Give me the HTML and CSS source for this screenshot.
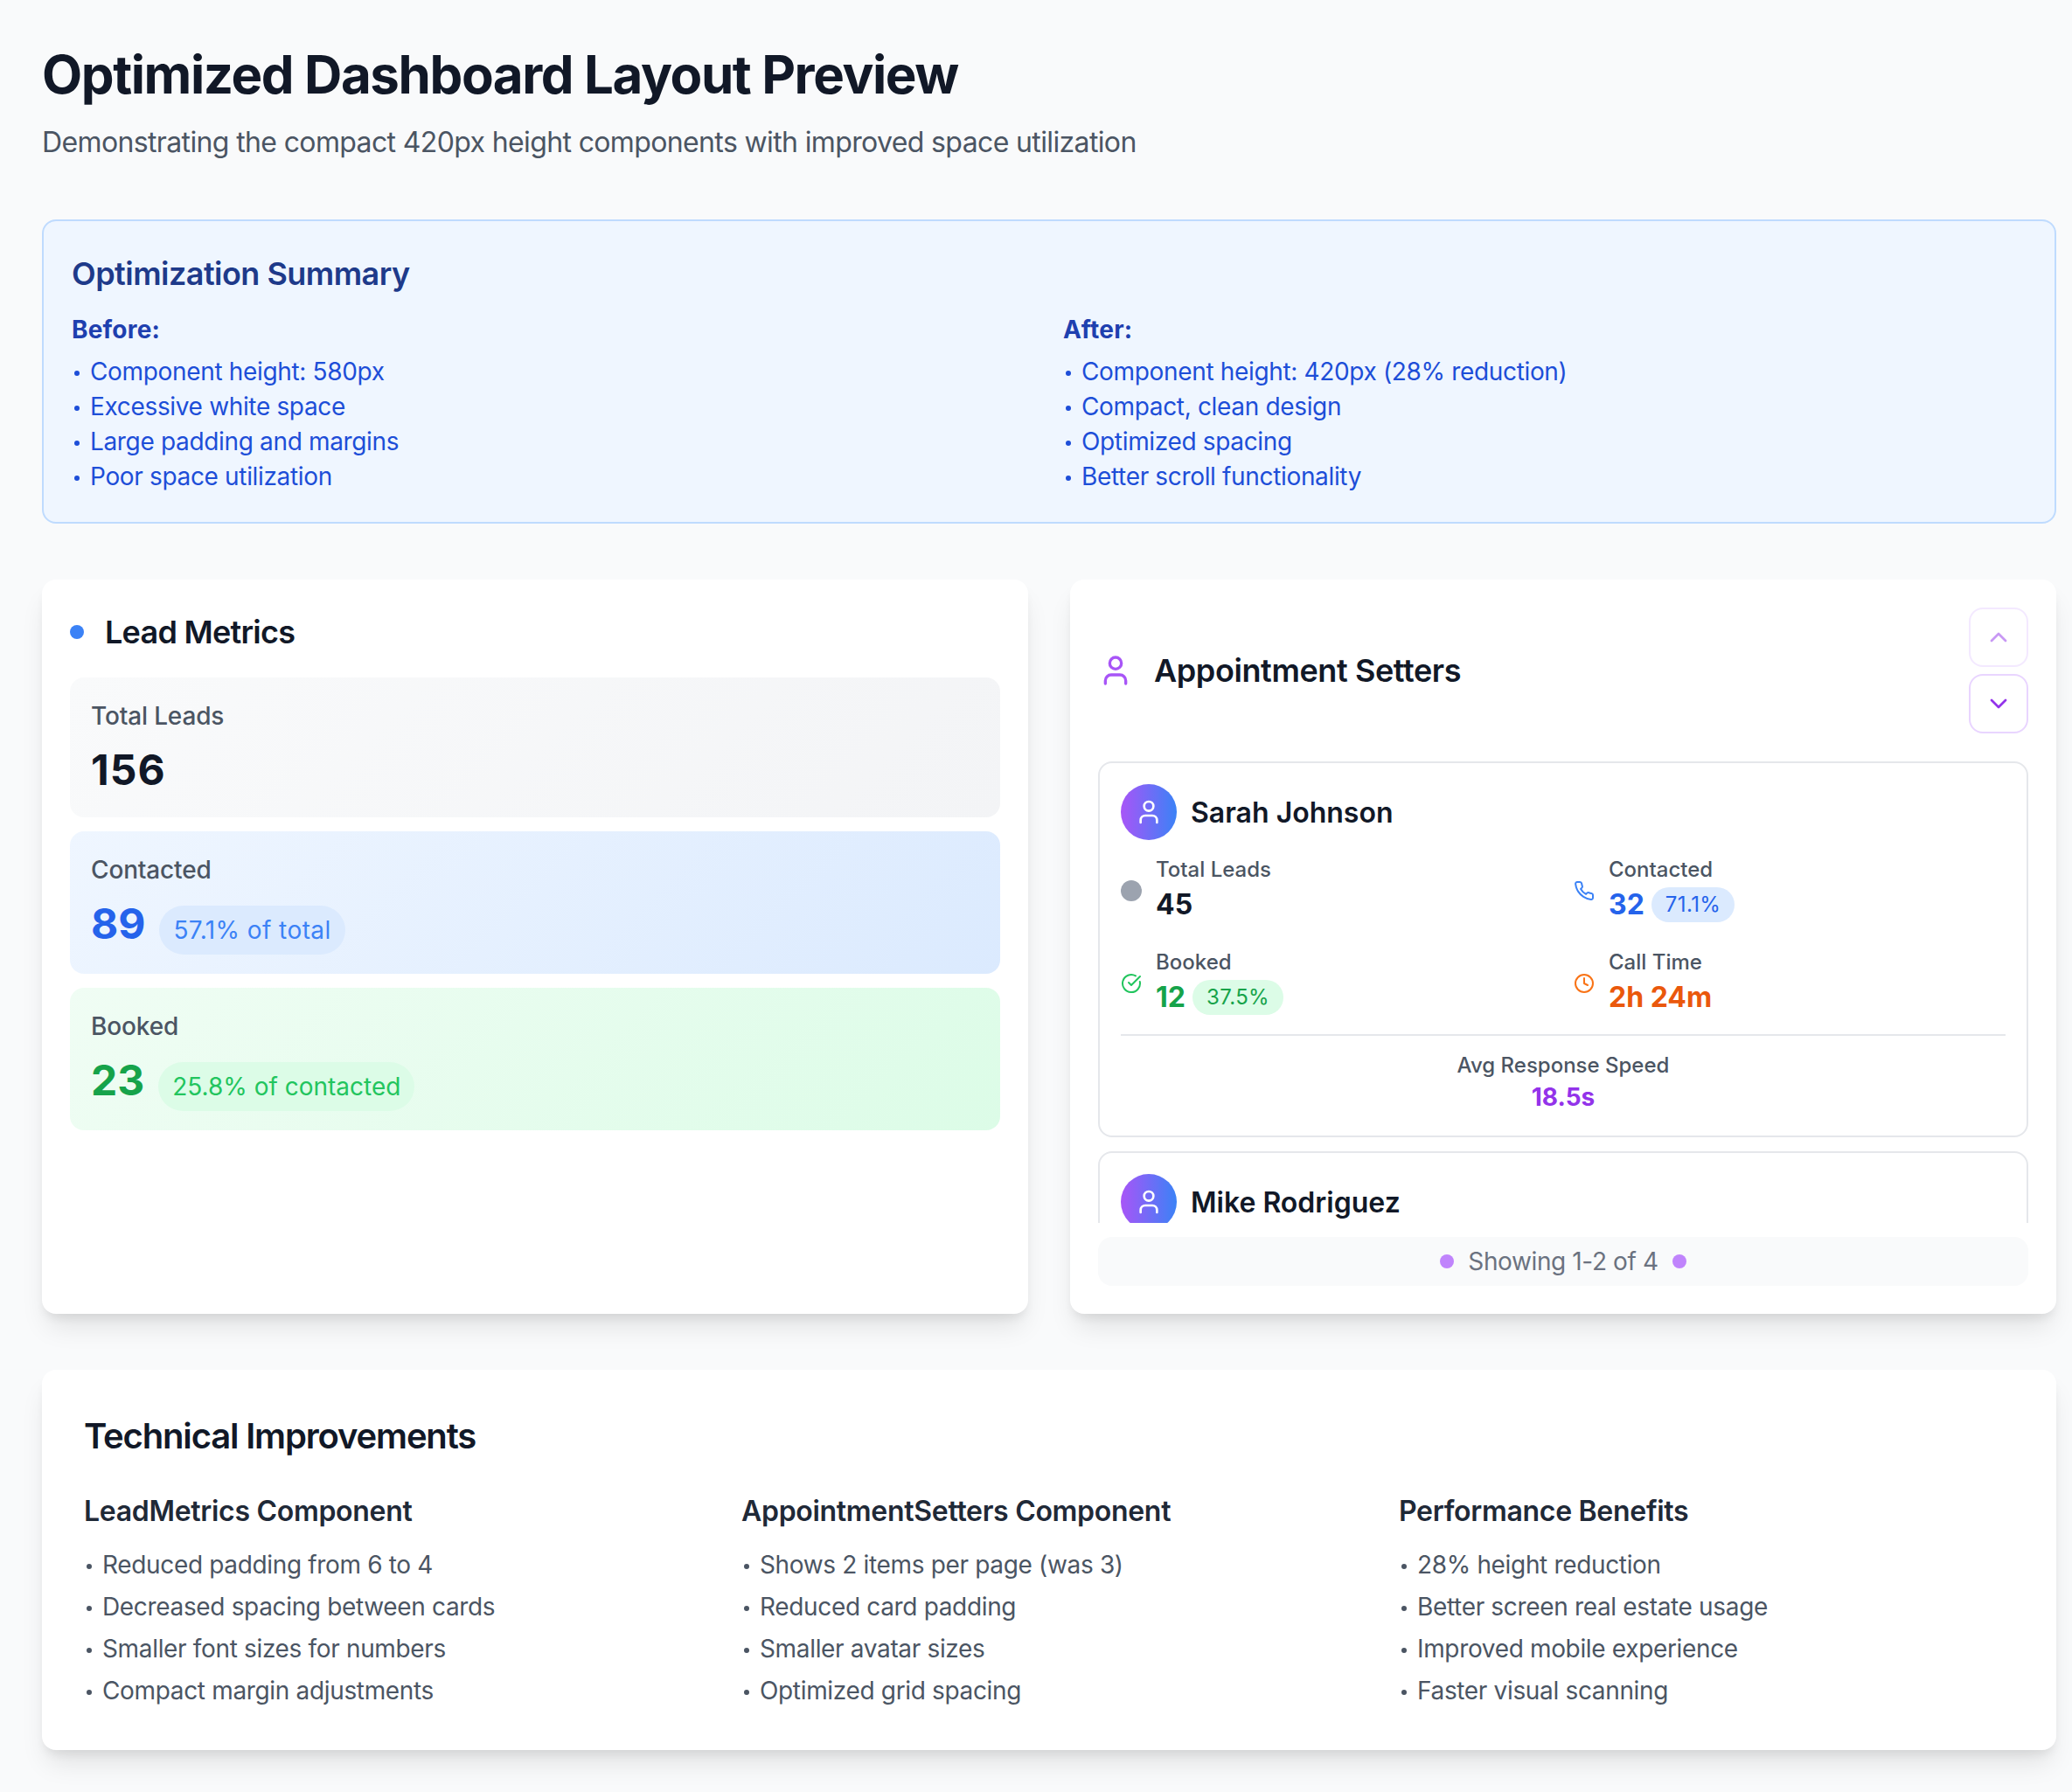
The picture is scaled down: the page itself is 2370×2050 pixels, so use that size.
FILE: index.html
```html
<!DOCTYPE html>
<html lang="en">
<head>
    <meta charset="UTF-8">
    <meta name="viewport" content="width=device-width, initial-scale=1.0">
    <title>Optimized Dashboard Layout Preview</title>
    <link rel="stylesheet" href="styles.css">
</head>
<body>

    <!-- Page header -->
    <h1>Optimized Dashboard Layout Preview</h1>
    <p class="subtitle">Demonstrating the compact 420px height components with improved space utilization</p>

    <!-- Summary -->
    <section class="summary">
        <h2>Optimization Summary</h2>
        <div class="summary-cols">
            <div>
                <h4>Before:</h4>
                <ul>
                    <li>Component height: 580px</li>
                    <li>Excessive white space</li>
                    <li>Large padding and margins</li>
                    <li>Poor space utilization</li>
                </ul>
            </div>
            <div>
                <h4>After:</h4>
                <ul>
                    <li>Component height: 420px (28% reduction)</li>
                    <li>Compact, clean design</li>
                    <li>Optimized spacing</li>
                    <li>Better scroll functionality</li>
                </ul>
            </div>
        </div>
    </section>

    <div class="panels">
        <!-- Lead metrics -->
        <section class="panel">
            <div class="metrics-title">
                <span class="blue-dot"></span>
                <h3>Lead Metrics</h3>
            </div>
            <div class="metric metric-gray">
                <div class="metric-label">Total Leads</div>
                <div class="metric-row"><span class="metric-num">156</span></div>
            </div>
            <div class="metric metric-blue">
                <div class="metric-label">Contacted</div>
                <div class="metric-row"><span class="metric-num">89</span><span class="metric-pill">57.1% of total</span></div>
            </div>
            <div class="metric metric-green">
                <div class="metric-label">Booked</div>
                <div class="metric-row"><span class="metric-num">23</span><span class="metric-pill">25.8% of contacted</span></div>
            </div>
        </section>

        <!-- Appointment setters -->
        <section class="panel">
            <div class="setters-head">
                <div class="setters-title">
                    <svg class="icon-user" viewBox="0 0 24 24"><path d="M19 21v-2a4 4 0 0 0-4-4H9a4 4 0 0 0-4 4v2"/><circle cx="12" cy="7" r="4"/></svg>
                    <h3>Appointment Setters</h3>
                </div>
                <div class="arrows">
                    <button class="arrow arrow-off"><svg viewBox="0 0 24 24"><path d="m18 15-6-6-6 6"/></svg></button>
                    <button class="arrow"><svg viewBox="0 0 24 24"><path d="m6 9 6 6 6-6"/></svg></button>
                </div>
            </div>
            <div class="setters-list">
                <div class="setter">
                    <div class="setter-head">
                        <span class="avatar"><svg viewBox="0 0 24 24"><path d="M19 21v-2a4 4 0 0 0-4-4H9a4 4 0 0 0-4 4v2"/><circle cx="12" cy="7" r="4"/></svg></span>
                        <span class="setter-name">Sarah Johnson</span>
                    </div>
                    <div class="stats">
                        <div class="stat">
                            <span class="gray-dot"></span>
                            <div>
                                <div class="stat-label">Total Leads</div>
                                <div class="stat-row"><span class="stat-num">45</span></div>
                            </div>
                        </div>
                        <div class="stat">
                            <svg class="stat-icon phone" viewBox="0 0 24 24"><path d="M22 16.92v3a2 2 0 0 1-2.18 2 19.79 19.79 0 0 1-8.63-3.07 19.5 19.5 0 0 1-6-6 19.79 19.79 0 0 1-3.07-8.67A2 2 0 0 1 4.11 2h3a2 2 0 0 1 2 1.72 12.84 12.84 0 0 0 .7 2.81 2 2 0 0 1-.45 2.11L8.09 9.91a16 16 0 0 0 6 6l1.27-1.27a2 2 0 0 1 2.11-.45 12.84 12.84 0 0 0 2.81.7A2 2 0 0 1 22 16.92z"/></svg>
                            <div>
                                <div class="stat-label">Contacted</div>
                                <div class="stat-row"><span class="stat-num blue">32</span><span class="stat-pill pill-blue">71.1%</span></div>
                            </div>
                        </div>
                        <div class="stat">
                            <svg class="stat-icon check" viewBox="0 0 24 24"><path d="M21.801 10A10 10 0 1 1 17 3.335"/><path d="m9 11 3 3L22 4"/></svg>
                            <div>
                                <div class="stat-label">Booked</div>
                                <div class="stat-row"><span class="stat-num green">12</span><span class="stat-pill pill-green">37.5%</span></div>
                            </div>
                        </div>
                        <div class="stat">
                            <svg class="stat-icon clock" viewBox="0 0 24 24"><circle cx="12" cy="12" r="10"/><path d="M12 6v6l4 2"/></svg>
                            <div>
                                <div class="stat-label">Call Time</div>
                                <div class="stat-row"><span class="stat-num orange">2h 24m</span></div>
                            </div>
                        </div>
                    </div>
                    <div class="speed">
                        <div class="stat-label">Avg Response Speed</div>
                        <div class="speed-num">18.5s</div>
                    </div>
                </div>
                <div class="setter">
                    <div class="setter-head">
                        <span class="avatar"><svg viewBox="0 0 24 24"><path d="M19 21v-2a4 4 0 0 0-4-4H9a4 4 0 0 0-4 4v2"/><circle cx="12" cy="7" r="4"/></svg></span>
                        <span class="setter-name">Mike Rodriguez</span>
                    </div>
                </div>
            </div>
            <div class="pager">
                <span class="purple-dot"></span>
                <span>Showing 1-2 of 4</span>
                <span class="purple-dot"></span>
            </div>
        </section>
    </div>

    <!-- Technical notes -->
    <section class="tech">
        <h2>Technical Improvements</h2>
        <div class="tech-cols">
            <div>
                <h4>LeadMetrics Component</h4>
                <ul>
                    <li>Reduced padding from 6 to 4</li>
                    <li>Decreased spacing between cards</li>
                    <li>Smaller font sizes for numbers</li>
                    <li>Compact margin adjustments</li>
                </ul>
            </div>
            <div>
                <h4>AppointmentSetters Component</h4>
                <ul>
                    <li>Shows 2 items per page (was 3)</li>
                    <li>Reduced card padding</li>
                    <li>Smaller avatar sizes</li>
                    <li>Optimized grid spacing</li>
                </ul>
            </div>
            <div>
                <h4>Performance Benefits</h4>
                <ul>
                    <li>28% height reduction</li>
                    <li>Better screen real estate usage</li>
                    <li>Improved mobile experience</li>
                    <li>Faster visual scanning</li>
                </ul>
            </div>
        </div>
    </section>

</body>
</html>
```

FILE: styles.css
```css
* {
    box-sizing: border-box;
}
body {
    margin: 0;
    padding: 48px 18px 48px 48px;
    background-color: #f9fafb;
    font-family: Inter, "Noto Sans", sans-serif;
    color: #111827;
}
h1, h2, h3, h4, p, ul {
    margin: 0;
    padding: 0;
}
ul {
    list-style: none;
}
li {
    letter-spacing: -0.34px;
}
li::before {
    content: "";
    display: inline-block;
    width: 6px;
    height: 6px;
    border-radius: 50%;
    background-color: currentColor;
    margin: 0 12px 0 3px;
    vertical-align: middle;
}
svg {
    fill: none;
    stroke: currentColor;
    stroke-width: 2;
    stroke-linecap: round;
    stroke-linejoin: round;
}
h1 {
    font-size: 60px;
    line-height: 74px;
    font-weight: 700;
    letter-spacing: -1.42px;
    margin-bottom: 17px;
}
.subtitle {
    font-size: 32px;
    line-height: 48px;
    letter-spacing: -0.63px;
    color: #4b5563;
    margin-bottom: 64px;
}

/* summary */
.summary {
    background-color: #eff6ff;
    border: 2px solid #bfdbfe;
    border-radius: 16px;
    padding: 32px;
    margin-bottom: 64px;
}
.summary h2 {
    font-size: 36px;
    line-height: 56px;
    font-weight: 600;
    letter-spacing: -0.53px;
    color: #1e3a8a;
    margin-bottom: 16px;
}
.summary-cols {
    display: grid;
    grid-template-columns: 1fr 1fr;
    gap: 32px;
}
.summary h4 {
    font-size: 28px;
    line-height: 40px;
    font-weight: 700;
    letter-spacing: 0.2px;
    color: #1e40af;
    margin-bottom: 8px;
}
.summary li {
    font-size: 28px;
    line-height: 40px;
    color: #1d4ed8;
}

/* panels */
.panels {
    display: grid;
    grid-template-columns: 1fr 1fr;
    gap: 48px;
    margin-bottom: 64px;
}
.panel {
    height: 840px;
    background-color: #fff;
    border-radius: 16px;
    padding: 32px;
    box-shadow: 0 20px 30px -6px rgba(0, 0, 0, 0.1), 0 8px 12px -4px rgba(0, 0, 0, 0.08);
    display: flex;
    flex-direction: column;
}
.panel h3 {
    font-size: 36px;
    line-height: 56px;
    font-weight: 600;
    letter-spacing: -0.4px;
}
.metrics-title {
    display: flex;
    align-items: center;
    gap: 24px;
    margin-bottom: 24px;
}
.metrics-title h3 {
    letter-spacing: -0.75px;
}
.blue-dot {
    width: 16px;
    height: 16px;
    border-radius: 50%;
    background-color: #3b82f6;
}
.metric {
    border-radius: 16px;
    padding: 24px;
    margin-bottom: 16px;
}
.metric-gray {
    background: linear-gradient(135deg, #f9fafb, #f3f4f6);
}
.metric-blue {
    background: linear-gradient(135deg, #eff6ff, #dbeafe);
}
.metric-green {
    background: linear-gradient(135deg, #f0fdf4, #dcfce7);
}
.metric-label {
    font-size: 28px;
    line-height: 40px;
    font-weight: 500;
    letter-spacing: -0.15px;
    color: #4b5563;
    margin-bottom: 8px;
}
.metric-row {
    display: flex;
    align-items: baseline;
    gap: 16px;
}
.metric-num {
    font-size: 48px;
    line-height: 64px;
    font-weight: 700;
    padding-top: 2px;
    margin-bottom: -2px;
}
.metric-gray .metric-num {
    letter-spacing: 1px;
}
.metric-blue .metric-num {
    color: #2563eb;
}
.metric-green .metric-num {
    color: #16a34a;
}
.metric-pill {
    font-size: 28px;
    line-height: 40px;
    padding: 8px 16px;
    border-radius: 999px;
    margin-bottom: -2px;
}
.metric-blue .metric-pill {
    background-color: #dbeafe;
    color: #3b82f6;
    letter-spacing: 0.43px;
}
.metric-green .metric-pill {
    background-color: #dcfce7;
    color: #22c55e;
}

/* setters */
.setters-head {
    display: flex;
    align-items: center;
    justify-content: space-between;
    margin-bottom: 32px;
}
.setters-title {
    display: flex;
    align-items: center;
    gap: 24px;
}
.icon-user {
    width: 40px;
    height: 40px;
    color: #a855f7;
}
.arrows {
    display: flex;
    flex-direction: column;
    gap: 8px;
}
.arrow {
    width: 68px;
    height: 68px;
    padding: 0;
    border: 2px solid #e9d5ff;
    border-radius: 16px;
    background-color: #fff;
    color: #9333ea;
    display: flex;
    align-items: center;
    justify-content: center;
}
.arrow svg {
    width: 32px;
    height: 32px;
}
.arrow-off {
    opacity: 0.5;
}
.setters-list {
    flex: 1;
    min-height: 0;
    overflow: hidden;
    display: flex;
    flex-direction: column;
    gap: 16px;
}
.setter {
    flex-shrink: 0;
    border: 2px solid #e5e7eb;
    border-radius: 16px;
    padding: 24px;
}
.setter-head {
    display: flex;
    align-items: center;
    gap: 16px;
    margin-bottom: 18px;
}
.avatar {
    width: 64px;
    height: 64px;
    border-radius: 50%;
    background: linear-gradient(90deg, #a855f7, #3b82f6);
    color: #fff;
    display: flex;
    align-items: center;
    justify-content: center;
}
.avatar svg {
    width: 32px;
    height: 32px;
}
.setter-name {
    font-size: 32px;
    line-height: 48px;
    font-weight: 600;
    padding-top: 2px;
}
.stats {
    display: grid;
    grid-template-columns: 1fr 1fr;
    gap: 26px 24px;
}
.stat {
    display: flex;
    align-items: center;
    gap: 16px;
}
.gray-dot {
    width: 24px;
    height: 24px;
    border-radius: 50%;
    background-color: #9ca3af;
}
.stat-icon {
    width: 24px;
    height: 24px;
}
.phone {
    color: #3b82f6;
}
.check {
    color: #22c55e;
}
.clock {
    color: #f97316;
}
.stat-label {
    font-size: 24px;
    line-height: 32px;
    font-weight: 500;
    color: #4b5563;
}
.stat-row {
    display: flex;
    align-items: center;
    gap: 8px;
}
.stat-num {
    font-size: 32px;
    line-height: 48px;
    font-weight: 700;
}
.blue {
    color: #2563eb;
}
.green {
    color: #16a34a;
}
.orange {
    color: #ea580c;
}
.stat-pill {
    font-size: 24px;
    line-height: 32px;
    padding: 4px 16px;
    border-radius: 999px;
    letter-spacing: 0.4px;
}
.pill-blue {
    background-color: #dbeafe;
    color: #2563eb;
}
.pill-green {
    background-color: #dcfce7;
    color: #16a34a;
}
.speed {
    margin-top: 18px;
    padding-top: 18px;
    border-top: 2px solid #e5e7eb;
    text-align: center;
}
.speed-num {
    font-size: 28px;
    line-height: 40px;
    font-weight: 700;
    color: #9333ea;
}
.pager {
    margin-top: 16px;
    height: 56px;
    flex-shrink: 0;
    background-color: #f9fafb;
    border-radius: 16px;
    display: flex;
    align-items: center;
    justify-content: center;
    gap: 16px;
    font-size: 28px;
    letter-spacing: -0.38px;
    color: #6b7280;
}
.purple-dot {
    width: 16px;
    height: 16px;
    border-radius: 50%;
    background-color: #c084fc;
}

/* technical */
.tech {
    background-color: #fff;
    border-radius: 16px;
    padding: 48px;
    box-shadow: 0 20px 30px -6px rgba(0, 0, 0, 0.1), 0 8px 12px -4px rgba(0, 0, 0, 0.08);
}
.tech h2 {
    font-size: 40px;
    line-height: 56px;
    font-weight: 600;
    letter-spacing: -1.17px;
    margin-bottom: 34px;
}
.tech-cols {
    display: grid;
    grid-template-columns: repeat(3, 1fr);
    gap: 48px;
}
.tech h4 {
    font-size: 32px;
    line-height: 48px;
    font-weight: 600;
    letter-spacing: -0.3px;
    color: #1f2937;
    margin-bottom: 17px;
}
.tech li {
    font-size: 28px;
    line-height: 40px;
    color: #4b5563;
    margin-bottom: 8px;
}
.tech li:last-child {
    margin-bottom: 0;
}
```
